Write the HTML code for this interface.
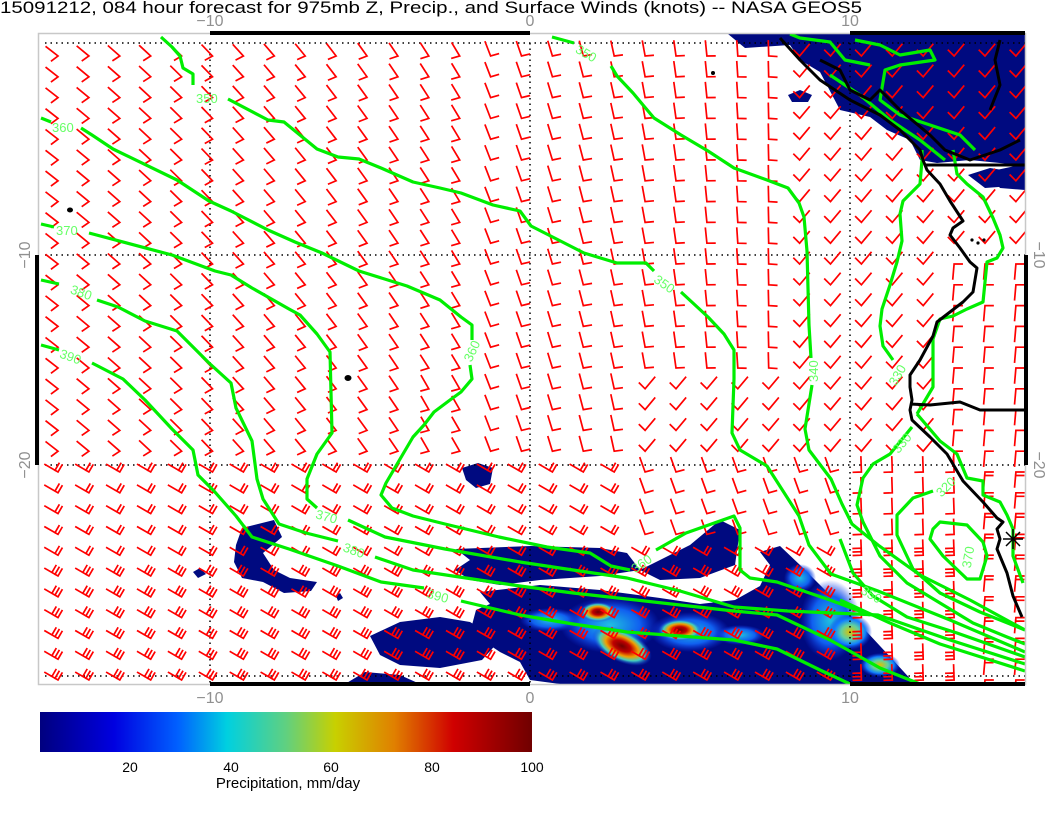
<!DOCTYPE html>
<html><head><meta charset="utf-8"><style>
html,body{margin:0;padding:0;background:#fff;width:1056px;height:816px;overflow:hidden}
svg{display:block}
</style></head><body>
<svg id="s" width="1056" height="816" viewBox="0 0 1056 816" xmlns="http://www.w3.org/2000/svg" font-family="Liberation Sans, sans-serif">
<defs>
<clipPath id="cp"><rect x="39" y="34" width="986" height="650"/></clipPath>
<linearGradient id="jet" x1="0" x2="1" y1="0" y2="0">
<stop offset="0" stop-color="#00007f"/><stop offset="0.15" stop-color="#0000e0"/><stop offset="0.28" stop-color="#0060ff"/><stop offset="0.38" stop-color="#00d0e0"/><stop offset="0.5" stop-color="#60d080"/><stop offset="0.6" stop-color="#c8d000"/><stop offset="0.72" stop-color="#e08000"/><stop offset="0.84" stop-color="#d00000"/><stop offset="1" stop-color="#700000"/>
</linearGradient>
<radialGradient id="hot"><stop offset="0" stop-color="#700000"/><stop offset="0.3" stop-color="#c00000"/><stop offset="0.55" stop-color="#f0a000"/><stop offset="0.75" stop-color="#40d0c0"/><stop offset="1" stop-color="#1030e0" stop-opacity="0"/></radialGradient>
<radialGradient id="warm"><stop offset="0" stop-color="#e0c000"/><stop offset="0.4" stop-color="#60d0a0"/><stop offset="0.7" stop-color="#1080ff"/><stop offset="1" stop-color="#1030e0" stop-opacity="0"/></radialGradient>
<radialGradient id="cool"><stop offset="0" stop-color="#20c0e0"/><stop offset="0.6" stop-color="#1060f0"/><stop offset="1" stop-color="#1030e0" stop-opacity="0"/></radialGradient>
</defs>
<text x="0" y="13" font-size="17" fill="#000" textLength="862" lengthAdjust="spacingAndGlyphs">15091212, 084 hour forecast for 975mb Z, Precip., and Surface Winds (knots) -- NASA GEOS5</text>

<g clip-path="url(#cp)">
<g fill="#000a80">
<polygon points="728,34 1025,34 1025,190 1000,188 987,172 1020,165 970,160 937,163 920,160 910,140 887,130 870,117 840,110 820,72 800,60 790,45 745,48"/>
<polygon points="788,95 800,90 812,95 808,102 792,102"/>
<polygon points="968,175 990,168 1015,172 1012,186 985,188"/>
<polygon points="242,528 274,520 282,537 263,553 274,570 290,578 317,582 311,591 284,593 263,582 242,578 234,562 236,545"/>
<polygon points="193,572 200,568 206,574 198,578"/>
<polygon points="462,468 478,463 493,468 490,484 476,488 466,480"/>
<polygon points="456,549 531,546 600,548 627,553 640,570 600,576 540,580 500,585 470,580 455,570 470,560"/>
<polygon points="640,570 690,545 720,520 740,530 735,565 700,578 660,580"/>
<polygon points="480,592 540,585 600,590 660,598 700,604 735,600 760,586 770,565 760,552 780,546 800,565 833,598 867,632 893,660 915,684 560,684 530,680 520,662 500,652 482,640 472,625 476,610 490,604"/>
<polygon points="370,636 400,622 440,617 470,622 500,640 482,660 440,668 400,665 380,655"/>
<polygon points="345,684 365,672 400,675 420,684"/>
<polygon points="336,596 340,593 343,598 338,601"/>
</g>
<ellipse cx="610" cy="625" rx="50" ry="28" fill="url(#cool)"/>
<ellipse cx="690" cy="632" rx="40" ry="20" fill="url(#cool)"/>
<ellipse cx="830" cy="620" rx="30" ry="40" fill="url(#cool)"/>
<ellipse cx="598" cy="612" rx="18" ry="10" fill="url(#hot)"/>
<ellipse cx="622" cy="646" rx="32" ry="16" fill="url(#hot)" transform="rotate(25 622 646)"/>
<ellipse cx="680" cy="630" rx="22" ry="11" fill="url(#hot)"/>
<ellipse cx="850" cy="632" rx="22" ry="18" fill="url(#warm)"/>
<ellipse cx="800" cy="578" rx="16" ry="14" fill="url(#cool)"/>
<ellipse cx="550" cy="620" rx="30" ry="12" fill="url(#cool)"/>
<ellipse cx="740" cy="635" rx="25" ry="10" fill="url(#cool)"/>
<ellipse cx="880" cy="665" rx="20" ry="12" fill="url(#warm)"/>

<g stroke="#000" stroke-width="1.5" stroke-dasharray="1.5 4" fill="none">
<line x1="45" y1="43" x2="1025" y2="43"/><line x1="45" y1="255" x2="1025" y2="255"/><line x1="45" y1="465" x2="1025" y2="465"/><line x1="45" y1="676" x2="1025" y2="676"/>
<line x1="210" y1="43" x2="210" y2="684"/><line x1="530" y1="43" x2="530" y2="684"/><line x1="850" y1="43" x2="850" y2="684"/>
</g>

<g id="barbs" stroke="#ff0000" stroke-width="1.7" fill="none" stroke-linecap="square"></g>

<g stroke="#00ee00" stroke-width="3.2" fill="none" stroke-linejoin="round">
<polyline points="161,37 172,47 180,56 183,68 193,74 193,85"/>
<polyline points="228,99 268,120 284,122 317,149 338,157 359,159 381,168 413,182 440,188 461,193 493,205 520,211 531,226 584,253 617,263 646,263 654,271"/>
<polyline points="681,292 708,317 724,334 734,350 734,379 732,433 740,450 767,466 799,516 809,545 831,574 878,591 950,620 1025,652"/>
<polyline points="552,37 574,43"/>
<polyline points="611,66 617,76 633,93 643,105 654,118 681,135 708,151 734,168 767,180 788,188 799,203 804,217 807,251 809,325 811,358"/>
<polyline points="812,385 805,429 809,450 831,479 842,504 852,524 878,545 920,575 970,600 1025,630"/>
<polyline points="41,118 51,122"/>
<polyline points="81,128 92,135 113,149 177,180 209,201 231,211 268,230 295,242 322,253 359,271 407,286 440,300 461,317 472,325 472,340"/>
<polyline points="470,365 472,379 461,392 450,400 434,412 424,425 413,437 403,454 386,483 381,495 392,508 413,516 445,524 499,537 547,547 590,553 611,566 630,570"/>
<polyline points="656,550 686,533 734,516 740,528 740,570 750,578 777,582 830,600 870,615"/>
<polyline points="41,224 54,227"/>
<polyline points="89,233 172,255 215,271 231,275 252,288 289,309 300,315 317,334 330,352 332,433 317,454 307,479 307,499 317,508"/>
<polyline points="348,520 385,537 445,549 520,562 573,570 627,578 680,591 734,607 788,611 878,615 950,640 1025,664"/>
<polyline points="41,280 59,284"/>
<polyline points="97,300 118,307 145,321 177,331 209,363 231,383 236,408 252,441 257,479 263,499 279,524 306,533 338,541"/>
<polyline points="375,557 413,570 466,578 520,586 573,593 627,599 680,605 734,611 777,615 830,640 880,668 920,684"/>
<polyline points="41,345 59,350"/>
<polyline points="92,363 123,379 145,400 172,429 193,450 198,475 214,491 236,516 252,537 289,549 338,566 381,582 424,588"/>
<polyline points="461,601 520,615 573,624 627,632 680,636 734,640 777,649 820,670 850,684"/>
<polyline points="922,150 922,160 920,184 903,201 900,214 902,241 897,262 890,285 882,309 880,326 883,346 893,360"/>
<polyline points="912,427 890,454 873,464 863,478 857,505 863,522 880,556 907,583 940,603 973,623 1007,637 1025,644"/>
<polyline points="933,491 913,498 897,515 897,535 913,569 940,593 980,612 1025,630"/>
<polygon points="933,529 940,522 967,525 983,542 987,556 980,579 967,579 943,556 930,539"/>
<polyline points="840,539 853,573 873,596 907,617 957,633 1025,657"/>
<polyline points="840,600 890,623 940,644 1025,671"/>
<polyline points="953,150 957,174 967,184 983,197 993,218 1000,235 1003,248 997,258 987,262 983,302 967,309 953,316 940,319 933,339 933,387 917,414"/>
<polyline points="917,414 940,441 957,454 967,478 983,481 983,495 1000,502 1007,515 1013,529 1013,556 1023,583"/>
<polyline points="790,34 800,38 830,42 845,60 870,65"/>
<polyline points="855,40 880,45 900,55 930,50 935,60 900,65 885,70 880,100 900,115 930,125 960,135 975,150"/>
<polyline points="830,75 860,95 890,120 920,140 945,160"/>
</g>
<g fill="#66ff66" font-size="13">
<text x="196" y="103">350</text>
<text x="575" y="60" transform="rotate(30 590 55)">350</text>
<text x="52" y="132">360</text>
<text x="654" y="290" transform="rotate(35 667 284)">350</text>
<text x="462" y="356" transform="rotate(-65 472 352)">360</text>
<text x="630" y="567" transform="rotate(-35 643 562)">360</text>
<text x="56" y="235">370</text>
<text x="316" y="522" transform="rotate(15 330 516)">370</text>
<text x="70" y="298" transform="rotate(20 84 294)">380</text>
<text x="343" y="556" transform="rotate(20 357 551)">380</text>
<text x="60" y="362" transform="rotate(20 73 356)">390</text>
<text x="427" y="601" transform="rotate(15 440 596)">390</text>
<text x="800" y="376" transform="rotate(-90 812 370)">340</text>
<text x="885" y="378" transform="rotate(-60 898 373)">330</text>
<text x="890" y="446" transform="rotate(-50 903 441)">330</text>
<text x="934" y="490" transform="rotate(-45 947 485)">320</text>
<text x="955" y="560" transform="rotate(-80 968 555)">370</text>
<text x="860" y="600" transform="rotate(30 873 596)">350</text>
</g>
<g stroke="#000" stroke-width="3" fill="none" stroke-linejoin="round">
<polyline points="780,38 800,60 820,80 850,100 880,115 900,130 920,150 923,160 927,170 940,184 950,201 963,221 953,228 950,235 960,248 970,262 977,268 973,292 963,302 950,312 937,322 933,336 920,360 910,375 910,387 912,400 910,410 912,420 930,437 947,454 963,481 983,502 997,518 1003,522 997,529 1000,539 997,549 1007,573 1013,596 1022,617"/>
<polyline points="910,404 930,405 960,402 980,410 1025,410"/>
<polyline points="925,165 1025,165"/>
<polyline points="820,60 840,70 850,90 870,100 880,90 900,110 930,135 945,150 970,160 1000,150 1020,140"/>
<polyline points="990,110 1000,85 995,60 1000,40"/>
</g>
<g stroke="#000" stroke-width="1.5"><line x1="1003" y1="539" x2="1023" y2="539"/><line x1="1013" y1="529" x2="1013" y2="549"/><line x1="1006" y1="532" x2="1020" y2="546"/><line x1="1006" y1="546" x2="1020" y2="532"/></g>
<g fill="#000"><ellipse cx="70" cy="210" rx="3" ry="2.5"/><ellipse cx="348" cy="378" rx="3.5" ry="3"/><ellipse cx="713" cy="73" rx="2" ry="2"/><circle cx="972" cy="240" r="1.6"/><circle cx="978" cy="243" r="1.6"/><circle cx="984" cy="240" r="1.6"/></g>
</g>

<rect x="38.5" y="33.5" width="987" height="651" fill="none" stroke="#c8c8c8" stroke-width="1.5"/>
<g fill="#000">
<rect x="210" y="31" width="320" height="4"/><rect x="850" y="31" width="175" height="4"/>
<rect x="210" y="682" width="320" height="4"/><rect x="850" y="682" width="175" height="4"/>
<rect x="35" y="255" width="4" height="210"/><rect x="1024" y="255" width="4" height="210"/>
</g>
<g fill="#909090" font-size="16" text-anchor="middle">
<text x="210" y="26">−10</text><text x="530" y="26">0</text><text x="850" y="26">10</text>
<text x="210" y="703">−10</text><text x="530" y="703">0</text><text x="850" y="703">10</text>
<text transform="translate(30 255) rotate(-90)">−10</text><text transform="translate(30 465) rotate(-90)">−20</text>
<text transform="translate(1034 255) rotate(90)">−10</text><text transform="translate(1034 465) rotate(90)">−20</text>
</g>
<rect x="40" y="712" width="492" height="40" fill="url(#jet)"/>
<g font-size="14" fill="#000" text-anchor="middle">
<text x="130" y="772">20</text><text x="231" y="772">40</text><text x="331" y="772">60</text><text x="432" y="772">80</text><text x="532" y="772">100</text>
<text x="288" y="788" font-size="15">Precipitation, mm/day</text>
</g>
</svg>
<script>
(function(){
var g=document.getElementById('barbs'),out='';
function field(x,y){
 var a,d,n;
 if(y<470){
  if(x<480){a=-145+(x/480)*25;d=-75;n=1;if(y>380&&x>420){a=-120;}}
  else if(x<790&&!(y>380&&x>640)){a=-112+(x-480)/310*22;d=95;n=1;}
  else if(x>940&&y>262){a=95;d=-95;n=1;}
  else{a=-50;d=-85;n=1;}
 } else {
  if(x<850){a=-150;d=90;n=y>560?3:2;if(x>640&&y<540){a=-110;d=95;n=1;}}
  else if(x<985){a=-92;d=-90;n=y>550?3:1;}
  else{a=95;d=-95;n=2;}
 }
 return [a,d,n];
}
var R=Math.PI/180;
for(var j=0;j<31;j++){
 for(var i=0;i<32;i++){
  var vx=58+i*30.9, vy=56+j*20.8;
  var f=field(vx,vy),a=f[0]*R,b=(f[0]+f[1])*R,L=15,S=8;
  var ex=vx+L*Math.cos(a),ey=vy+L*Math.sin(a);
  var p='M'+ex.toFixed(1)+' '+ey.toFixed(1)+'L'+vx.toFixed(1)+' '+vy.toFixed(1)+'l'+(S*Math.cos(b)).toFixed(1)+' '+(S*Math.sin(b)).toFixed(1);
  for(var k=1;k<f[2];k++){
   var sx=vx+k*3.5*Math.cos(a),sy=vy+k*3.5*Math.sin(a);
   p+='M'+sx.toFixed(1)+' '+sy.toFixed(1)+'l'+(S*Math.cos(b)).toFixed(1)+' '+(S*Math.sin(b)).toFixed(1);
  }
  out+='<path d="'+p+'"/>';
 }
}
g.innerHTML=out;
})();
</script>
</body></html>
